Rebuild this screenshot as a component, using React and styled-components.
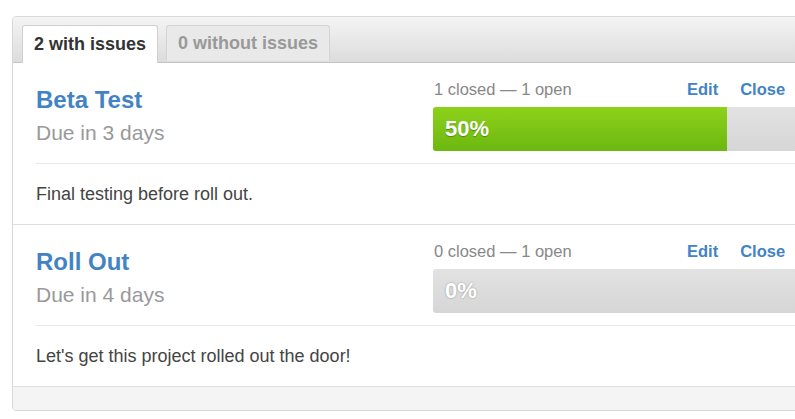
import styled, { createGlobalStyle } from "styled-components";

const GlobalStyle = createGlobalStyle`
  html, body {
    margin: 0;
    padding: 0;
    background: #fff;
    overflow: hidden;
  }
  body {
    font-family: "Liberation Sans", Arial, sans-serif;
  }
`;

const milestones = [
  {
    title: "Beta Test",
    due: "Due in 3 days",
    closed: 1,
    open: 1,
    description: "Final testing before roll out.",
  },
  {
    title: "Roll Out",
    due: "Due in 4 days",
    closed: 0,
    open: 1,
    description: "Let's get this project rolled out the door!",
  },
];

function App() {
  return (
    <Page>
      <GlobalStyle />
      <Box>
        <Tabs>
          <Tab $active>2 with issues</Tab>
          <Tab>0 without issues</Tab>
        </Tabs>
        {milestones.map((m) => {
          const total = m.closed + m.open;
          const pct = total ? Math.round((m.closed / total) * 100) : 0;
          return (
            <Milestone key={m.title}>
              <Top>
                <Info>
                  <Title>{m.title}</Title>
                  <Due>{m.due}</Due>
                </Info>
                <Meta>
                  <MetaRow>
                    <Counts>
                      {m.closed} closed — {m.open} open
                    </Counts>
                    <Actions>
                      <Action>Edit</Action>
                      <Action>Close</Action>
                    </Actions>
                  </MetaRow>
                  <Progress>
                    <Fill style={{ width: `${pct}%` }} />
                    <Percent $empty={pct === 0}>{pct}%</Percent>
                  </Progress>
                </Meta>
              </Top>
              <Description>{m.description}</Description>
            </Milestone>
          );
        })}
        <Footer />
      </Box>
    </Page>
  );
}

const Page = styled.div`
  padding: 16px 0 0 12px;
`;

const Box = styled.div`
  width: 1060px;
  border: 1px solid #d8d8d8;
  border-radius: 4px;
  background: #fff;
  overflow: hidden;
`;

const Tabs = styled.div`
  display: flex;
  gap: 8px;
  padding: 8px 0 0 9px;
  height: 37px;
  background: linear-gradient(#f4f4f4, #dcdcdc);
  border-bottom: 1px solid #c4c4c4;
`;

const Tab = styled.div`
  display: flex;
  align-items: center;
  padding: 0 11px 0 11px;
  height: ${(p) => (p.$active ? "38px" : "36px")};
  box-sizing: border-box;
  border: 1px solid ${(p) => (p.$active ? "#cfcfcf" : "#d4d4d4")};
  border-bottom: none;
  border-radius: 3px 3px 0 0;
  background: ${(p) => (p.$active ? "#fff" : "#e9e9e9")};
  color: ${(p) => (p.$active ? "#333" : "#999")};
  font-size: 18px;
  font-weight: bold;
  position: relative;
  z-index: 1;
`;

const Milestone = styled.div`
  padding: 0 0 0 23px;
  border-bottom: 1px solid #dedede;
`;

const Top = styled.div`
  display: flex;
  height: 100px;
  border-bottom: 1px solid #e8e8e8;
`;

const Info = styled.div`
  width: 397px;
  padding-top: 23px;
`;

const Title = styled.div`
  color: #4183c4;
  font-size: 24px;
  font-weight: bold;
  line-height: 28px;
`;

const Due = styled.div`
  color: #999;
  font-size: 21px;
  line-height: 30px;
  margin-top: 4px;
`;

const Meta = styled.div`
  width: 587px;
  padding-top: 15px;
`;

const MetaRow = styled.div`
  display: flex;
  align-items: center;
  height: 22px;
  padding-left: 1px;
`;

const Counts = styled.span`
  width: 253px;
  color: #888;
  font-size: 16.5px;
`;

const Actions = styled.div`
  display: flex;
  gap: 22px;
`;

const Action = styled.a`
  color: #4183c4;
  font-size: 16.5px;
  font-weight: bold;
  cursor: pointer;
`;

const Progress = styled.div`
  position: relative;
  height: 44px;
  margin-top: 7px;
  border-radius: 3px;
  background: linear-gradient(#e2e2e2, #d6d6d6);
  overflow: hidden;
`;

const Fill = styled.div`
  height: 100%;
  background: linear-gradient(#8dd11a, #6cb811);
`;

const Percent = styled.span`
  position: absolute;
  left: 12px;
  top: 0;
  line-height: 44px;
  font-size: 22px;
  font-weight: bold;
  color: #fff;
  text-shadow: ${(p) =>
    p.$empty ? "0 0 2px rgba(0,0,0,0.35)" : "0 1px 1px rgba(0,0,0,0.3)"};
`;

const Description = styled.div`
  height: 60px;
  display: flex;
  align-items: center;
  color: #444;
  font-size: 18px;
`;

const Footer = styled.div`
  height: 23px;
  background: #f4f4f4;
`;

export default App;
